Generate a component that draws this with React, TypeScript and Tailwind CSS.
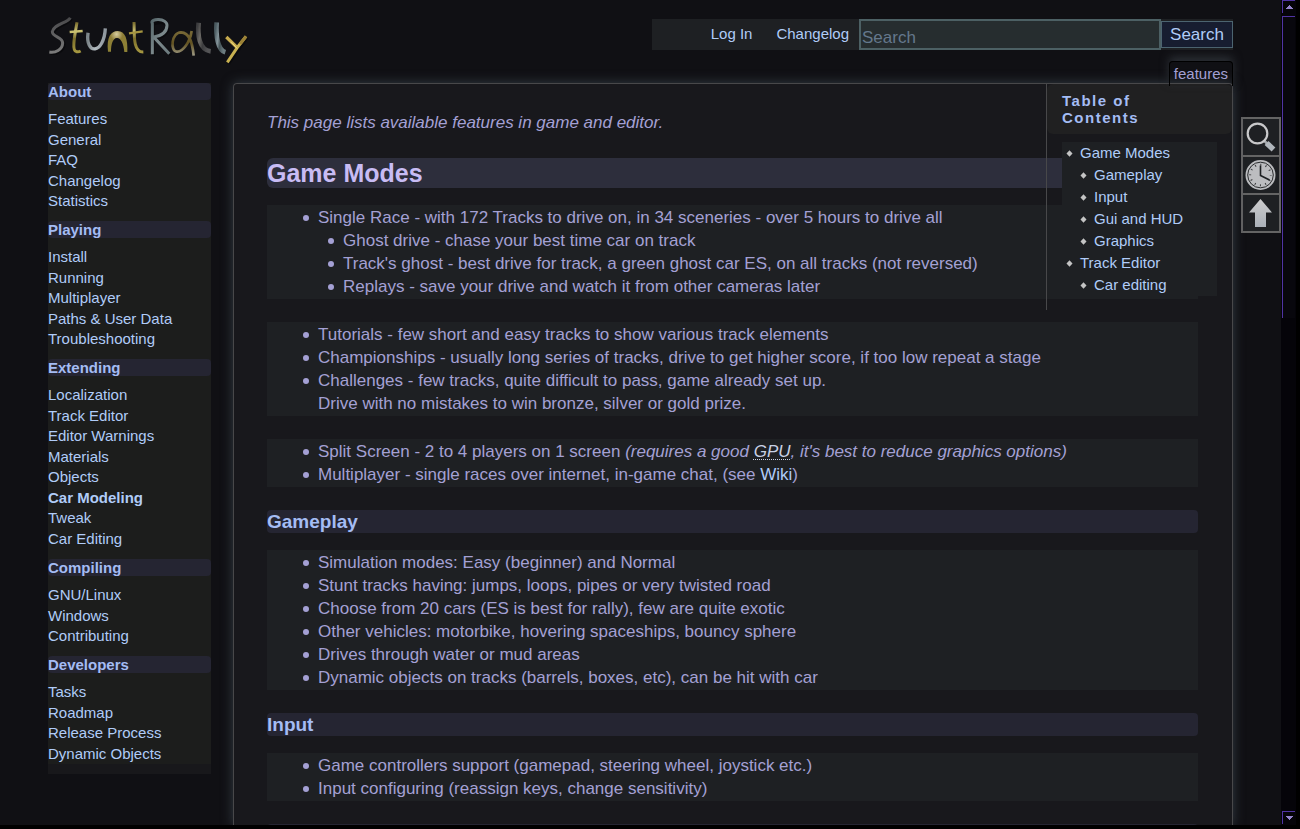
import type { ReactNode } from "react";

const navSections = [
  { title: "About", links: ["Features", "General", "FAQ", "Changelog", "Statistics"] },
  { title: "Playing", links: ["Install", "Running", "Multiplayer", "Paths & User Data", "Troubleshooting"] },
  {
    title: "Extending",
    links: ["Localization", "Track Editor", "Editor Warnings", "Materials", "Objects", "Car Modeling", "Tweak", "Car Editing"],
  },
  { title: "Compiling", links: ["GNU/Linux", "Windows", "Contributing"] },
  { title: "Developers", links: ["Tasks", "Roadmap", "Release Process", "Dynamic Objects"] },
];

const toc = [
  { title: "Game Modes", children: ["Gameplay", "Input", "Gui and HUD", "Graphics"] },
  { title: "Track Editor", children: ["Car editing"] },
];

function Logo() {
  return (
    <svg viewBox="45 40 621 162" className="h-[54px] w-[207px]" fill="none" role="img" aria-label="Stunt Rally">
      <defs>
        <linearGradient id="steel" x1="0" y1="0" x2="1" y2="1">
          <stop offset="0" stopColor="#56666a" />
          <stop offset="0.5" stopColor="#7c898c" />
          <stop offset="1" stopColor="#6c7a7e" />
        </linearGradient>
        <linearGradient id="gray" x1="0" y1="0" x2="0" y2="1">
          <stop offset="0" stopColor="#48484a" />
          <stop offset="1" stopColor="#7a7a7a" />
        </linearGradient>
        <linearGradient id="dark" x1="0" y1="0" x2="1" y2="0.5">
          <stop offset="0" stopColor="#3c3c3e" />
          <stop offset="0.3" stopColor="#6c6a66" />
          <stop offset="0.6" stopColor="#3c3c3e" />
          <stop offset="1" stopColor="#545456" />
        </linearGradient>
        <linearGradient id="slate" x1="0" y1="0" x2="1" y2="0.5">
          <stop offset="0" stopColor="#4a5a60" />
          <stop offset="0.35" stopColor="#84949a" />
          <stop offset="0.6" stopColor="#465458" />
          <stop offset="1" stopColor="#6c7c80" />
        </linearGradient>
        <linearGradient id="gold" x1="0" y1="0" x2="0" y2="1">
          <stop offset="0" stopColor="#75682a" />
          <stop offset="0.3" stopColor="#c9be70" />
          <stop offset="0.55" stopColor="#7b6e2a" />
          <stop offset="1" stopColor="#a49640" />
        </linearGradient>
        <linearGradient id="silver" x1="0" y1="0" x2="1" y2="0">
          <stop offset="0" stopColor="#7b8488" />
          <stop offset="0.4" stopColor="#b3bbc0" />
          <stop offset="1" stopColor="#8f979e" />
        </linearGradient>
        <linearGradient id="bronze" x1="0" y1="0" x2="0" y2="1">
          <stop offset="0" stopColor="#796a38" />
          <stop offset="0.5" stopColor="#625222" />
          <stop offset="1" stopColor="#a09c86" />
        </linearGradient>
        <radialGradient id="arch" cx="0.45" cy="0.15" r="0.8">
          <stop offset="0" stopColor="#d8cda0" />
          <stop offset="0.4" stopColor="#8d7d36" />
          <stop offset="1" stopColor="#8d8135" />
        </radialGradient>
      </defs>
      <g stroke="#050507" strokeOpacity="0.55" strokeWidth="8" transform="translate(4 4)">
        <path d="M121 54C112 70 70 74 68 96C66 113 99 110 99 130C97 151 76 160 58 157" />
        <path d="M366 68V163M366 70C424 48 424 108 372 111L419 162" />
        <path d="M589 112L624 144M648 110L592 188" />
      </g>
      <path d="M121 54C112 70 70 74 67 96C66 113 98 110 98 130C97 151 76 160 58 157" stroke="url(#gray)" strokeWidth="9" />
      <path d="M141 68C136 98 124 151 138 155Q144 158 152 154" stroke="url(#gold)" strokeWidth="9" />
      <path d="M119 97L158 94" stroke="#c9c070" strokeWidth="7" />
      <path d="M174 99C165 168 222 164 226 86" stroke="url(#silver)" strokeWidth="10" />
      <path d="M234 156C229 112 243 94 263 94C286 94 294 120 292 157H283C281 130 271 113 260 115C249 116 243 133 243 156Z" fill="url(#arch)" />
      <path d="M312 67C314 94 306 158 340 157" stroke="url(#gold)" strokeWidth="9" />
      <path d="M297 101L338 95" stroke="#a49440" strokeWidth="7" />
      <path d="M367 164L367 72C358 54 412 54 411 78C410 101 391 109 371 112L418 162" stroke="url(#steel)" strokeWidth="9" />
      <path d="M485 94C480 128 458 158 440 156C420 154 424 99 453 98C478 99 487 126 491 168" stroke="url(#bronze)" strokeWidth="8" />
      <path d="M506 69C502 104 507 151 542 155" stroke="url(#dark)" strokeWidth="14" />
      <path d="M560 68C557 107 563 151 586 158" stroke="url(#slate)" strokeWidth="14" />
      <path d="M589 112L624 146" stroke="#c7ab4e" strokeWidth="10" />
      <path d="M648 110L623 142L592 188" stroke="#c7b050" strokeWidth="9" />
      <path d="M648 110L630 133" stroke="#9b8136" strokeWidth="9" />
      <path d="M603 126L622 147" stroke="#f0dc80" strokeWidth="3" />
    </svg>
  );
}

function Diamond() {
  return (
    <svg viewBox="0 0 7 7" className="h-[7px] w-[7px] shrink-0" aria-hidden="true">
      <path d="M3.5 0.3L6.5 3.5L3.5 6.7L0.5 3.5Z" fill="#c4c4c4" />
    </svg>
  );
}

function TocLink({ children }: { children: string }) {
  return (
    <a href="#" className="flex items-center gap-[7px]">
      <Diamond />
      {children}
    </a>
  );
}

function Toc() {
  return (
    <nav aria-label="Table of Contents" className="float-right w-[186px] border-l border-[#48484a] pb-[14px]">
      <h2 className="rounded-md bg-[#202021] py-2 pl-[15px] pr-12 text-[15px] font-bold leading-[17px] tracking-widest text-[#a4bcf4]">
        Table of Contents
      </h2>
      <ul className="mx-[15px] mt-2 bg-[#1e2023] pl-1 text-[15px] leading-[22px] text-[#b0ccf8]">
        {toc.map((entry) => (
          <li key={entry.title}>
            <TocLink>{entry.title}</TocLink>
            <ul className="pl-[14px]">
              {entry.children.map((child) => (
                <li key={child}>
                  <TocLink>{child}</TocLink>
                </li>
              ))}
            </ul>
          </li>
        ))}
      </ul>
    </nav>
  );
}

function List({ children }: { children: ReactNode }) {
  return <ul className="mt-[23px] bg-[#1e2023] py-px pl-[51px] [h2+&]:mt-[17px] [h3+&]:mt-[17px]">{children}</ul>;
}

function Item({ children }: { children: ReactNode }) {
  return (
    <li className="relative before:absolute before:-left-[15px] before:top-[9px] before:h-1.5 before:w-1.5 before:rounded-full before:bg-[#a4a0d4]">
      {children}
    </li>
  );
}

const headingBar = "mt-[23px] rounded bg-[#252532]";

function SubHeading({ children }: { children: string }) {
  return <h3 className={`${headingBar} text-[19px] font-bold leading-[23px] text-[#a4bcf4]`}>{children}</h3>;
}

function Article() {
  return (
    <article className="pl-[33px] pr-[34px] pt-[27px] text-[17px] leading-[23px] text-[#a4a0d4]">
      <p className="mb-6">
        <em>This page lists available features in game and editor.</em>
      </p>
      <h2 className="rounded-md bg-[#2d2e3c] text-[25px] font-bold leading-[30px] text-[#c8bcf4]">Game Modes</h2>
      <List>
        <Item>
          Single Race - with 172 Tracks to drive on, in 34 sceneries - over 5 hours to drive all
          <ul className="pl-[25px]">
            <Item>Ghost drive - chase your best time car on track</Item>
            <Item>Track's ghost - best drive for track, a green ghost car ES, on all tracks (not reversed)</Item>
            <Item>Replays - save your drive and watch it from other cameras later</Item>
          </ul>
        </Item>
      </List>
      <List>
        <Item>Tutorials - few short and easy tracks to show various track elements</Item>
        <Item>Championships - usually long series of tracks, drive to get higher score, if too low repeat a stage</Item>
        <Item>
          Challenges - few tracks, quite difficult to pass, game already set up.
          <br />
          Drive with no mistakes to win bronze, silver or gold prize.
        </Item>
      </List>
      <List>
        <Item>
          Split Screen - 2 to 4 players on 1 screen{" "}
          <em>
            (requires a good{" "}
            <abbr
              title="Graphics Processing Unit"
              className="text-[#c8d0e4] underline decoration-dotted decoration-1 underline-offset-2"
            >
              GPU
            </abbr>
            , it's best to reduce graphics options)
          </em>
        </Item>
        <Item>
          Multiplayer - single races over internet, in-game chat, (see{" "}
          <a href="#" className="text-[#b0ccf8]">
            Wiki
          </a>
          )
        </Item>
      </List>
      <SubHeading>Gameplay</SubHeading>
      <List>
        <Item>Simulation modes: Easy (beginner) and Normal</Item>
        <Item>Stunt tracks having: jumps, loops, pipes or very twisted road</Item>
        <Item>Choose from 20 cars (ES is best for rally), few are quite exotic</Item>
        <Item>Other vehicles: motorbike, hovering spaceships, bouncy sphere</Item>
        <Item>Drives through water or mud areas</Item>
        <Item>Dynamic objects on tracks (barrels, boxes, etc), can be hit with car</Item>
      </List>
      <SubHeading>Input</SubHeading>
      <List>
        <Item>Game controllers support (gamepad, steering wheel, joystick etc.)</Item>
        <Item>Input configuring (reassign keys, change sensitivity)</Item>
      </List>
      <div className={`${headingBar} h-[23px]`} />
    </article>
  );
}

function Sidebar() {
  return (
    <nav aria-label="Sidebar" className="w-[163px] shrink-0 self-start bg-[#18181b] pb-2.5">
      <div className="bg-[#1c1d1c]">
        {navSections.map((section) => (
          <section key={section.title} className="pb-2.5 last:pb-0">
            <h3 className="rounded bg-[#252532] text-[15px] font-bold leading-[17px] text-[#a4bcf4]">{section.title}</h3>
            <ul className="pt-[9px] text-[15px] leading-5 text-[#b0ccf8]">
              {section.links.map((link) => (
                <li key={link} className="even:pt-px">
                  <a href="#" className={link === "Car Modeling" ? "font-bold" : ""}>
                    {link}
                  </a>
                </li>
              ))}
            </ul>
          </section>
        ))}
      </div>
    </nav>
  );
}

function PageTools() {
  const button = "flex h-10 w-10 items-center justify-center border-2 border-[#646464] bg-[#1e2023]";
  return (
    <div className="mt-[34px] flex shrink-0 flex-col -space-y-0.5">
      <button type="button" aria-label="Search page" className={button}>
        <svg viewBox="0 0 32 32" className="h-8 w-8 shrink-0" fill="none">
          <path d="M18.500 19L22 22.500" stroke="#a4a8ac" strokeWidth="2.500" />
          <path d="M21.500 22L28.500 28.500" stroke="#b0b6bc" strokeWidth="5.500" />
          <circle cx="12.500" cy="12.500" r="9.800" stroke="#c8c8ca" strokeWidth="2.200" />
        </svg>
      </button>
      <button type="button" aria-label="Old revisions" className={button}>
        <svg viewBox="0 0 32 32" className="h-8 w-8 shrink-0" fill="none">
          <circle cx="15.500" cy="16" r="15" fill="#bcbdc0" />
          <circle cx="15.500" cy="16" r="12.800" stroke="#292b2d" strokeWidth="1" />
          <circle cx="15.500" cy="16" r="10.300" stroke="#393b3d" strokeWidth="2" strokeDasharray="1 4.393" strokeDashoffset="0.500" />
          <path d="M15.500 6.500V16.500L24.500 21" stroke="#1d2022" strokeWidth="1.600" />
        </svg>
      </button>
      <button type="button" aria-label="Back to top" className={button}>
        <svg viewBox="0 0 32 32" className="h-8 w-8 shrink-0">
          <defs>
            <linearGradient id="up" x1="0" y1="0" x2="0" y2="1">
              <stop offset="0" stopColor="#cdcdcd" />
              <stop offset="1" stopColor="#aab0b8" />
            </linearGradient>
          </defs>
          <path d="M15.500 2L27 15.500H21V30H10V15.500H4Z" fill="url(#up)" />
        </svg>
      </button>
    </div>
  );
}

function ScrollArrow({ down = false }: { down?: boolean }) {
  return (
    <div className="flex h-[13px] w-[13px] items-center justify-center border-l border-t border-[#5034a4]">
      <svg viewBox="0 0 7 4" className="h-1 w-[7px]" fill="#9484cc" shapeRendering="crispEdges">
        {down ? <path d="M0 0H7V1H6V2H5V3H4V4H3V3H2V2H1V1H0Z" /> : <path d="M3 0H4V1H5V2H6V3H7V4H0V3H1V2H2V1H3Z" />}
      </svg>
    </div>
  );
}

function ScrollBar() {
  return (
    <div aria-hidden="true" className="flex w-[19px] shrink-0 flex-col border-r-4 border-black bg-[#050409] pb-px pl-px">
      <ScrollArrow />
      <div className="mt-[3px] flex flex-1 flex-col">
        <div className="w-[13px] basis-[38%] border-l border-t border-[#5034a4] bg-[#08070d]" />
      </div>
      <ScrollArrow down />
    </div>
  );
}

export default function App() {
  return (
    <div className="flex h-screen overflow-hidden border-b-4 border-black bg-[#101014] font-['Liberation_Sans',Arial,sans-serif]">
      <div className="flex min-w-0 flex-1 flex-col pl-12">
        <header className="flex h-[83px] shrink-0 items-start justify-between pr-12">
          <a href="#" className="-ml-[3px] mt-[13px]">
            <Logo />
          </a>
          <form className="mt-[19px] flex h-[31px] items-center bg-[#1e2023] pl-[59px]" onSubmit={(e) => e.preventDefault()}>
            <a href="#" className="text-[15px] text-[#b0ccf8]">
              Log In
            </a>
            <a href="#" className="ml-6 mr-2.5 text-[15px] text-[#b0ccf8]">
              Changelog
            </a>
            <input
              type="search"
              aria-label="Search"
              placeholder="Search"
              className="h-[31px] w-[302px] border-2 border-[#4c6064] bg-[#262d2f] px-px pt-1.5 text-[17px] text-[#b0ccf8] placeholder:text-[#64788c]"
            />
            <button type="submit" className="h-[27px] w-[72px] border border-[#4c6470] bg-[#171d30] text-[17px] leading-[24px] text-[#b0ccf8]">
              Search
            </button>
          </form>
        </header>
        <div className="flex min-h-0 flex-1">
          <Sidebar />
          <div className="relative ml-[22px] min-w-0 flex-1">
            <main className="relative h-full overflow-hidden rounded-t border border-b-0 border-[#48484a] bg-[#18181c]">
              <Toc />
              <Article />
            </main>
            <div className="pointer-events-none absolute inset-0 rounded-t shadow-[0_0_12px_#343c44]" />
            <div className="absolute -top-[22px] right-0 h-[25px] rounded-t border border-b-0 border-black px-1 text-[15px] leading-[23px] text-[#a4a0d4] shadow-[0_-4px_10px_#2c3036]">
              features
            </div>
          </div>
          <div className="ml-2">
            <PageTools />
          </div>
        </div>
      </div>
      <ScrollBar />
    </div>
  );
}
